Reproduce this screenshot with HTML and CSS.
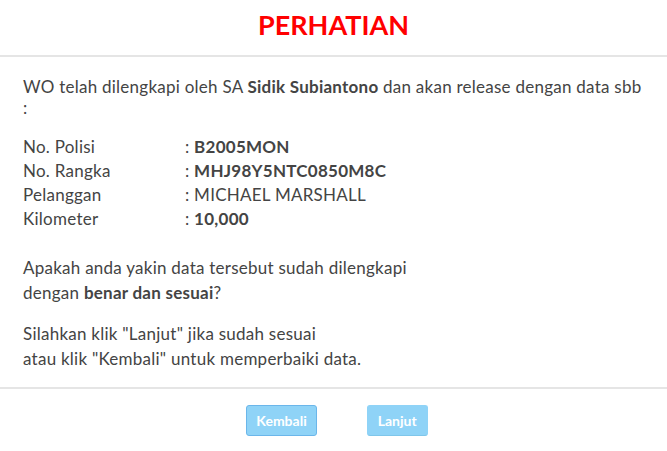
FILE: index.html
```html
<!DOCTYPE html>
<html lang="id">
<head>
	<meta charset="UTF-8">
	<title>Perhatian</title>
	<link rel="stylesheet" href="styles.css">
</head>
<body>
<div class="modal">
	<div class="modal-head">
		<h2>PERHATIAN</h2>
	</div>
	<div class="modal-body">
		<p class="intro">WO telah dilengkapi oleh SA <b>Sidik Subiantono</b> dan akan release dengan data sbb :</p>
		<ul class="data">
			<li><span class="lbl">No. Polisi</span><span>: <b>B2005MON</b></span></li>
			<li><span class="lbl">No. Rangka</span><span>: <b>MHJ98Y5NTC0850M8C</b></span></li>
			<li><span class="lbl">Pelanggan</span><span>: MICHAEL MARSHALL</span></li>
			<li><span class="lbl">Kilometer</span><span>: <b>10,000</b></span></li>
		</ul>
		<p class="ask">Apakah anda yakin data tersebut sudah dilengkapi<br>dengan <b>benar dan sesuai</b>?</p>
		<p class="ask">Silahkan klik "Lanjut" jika sudah sesuai<br>atau klik "Kembali" untuk memperbaiki data.</p>
	</div>
	<div class="modal-foot">
		<a href="javascript:;" class="btn btn-back">Kembali</a>
		<a href="javascript:;" class="btn btn-next">Lanjut</a>
	</div>
</div>
</body>
</html>
```

FILE: styles.css
```css
*{ padding: 0; margin: 0; box-sizing: border-box; }
body{ background: #fff; font-family: Lato, "Open Sans", sans-serif; color: #444; font-size: 17px; letter-spacing: 0.25px; }
li{ list-style-type: none; }

.modal{ width: 667px; }
.modal-head{ height: 57px; border-bottom: 2px solid #e5e5e5; text-align: center; }
.modal-head h2{ color: #f00; font-size: 27px; font-weight: 700; line-height: 48px; padding-top: 1px; letter-spacing: 0; }

.modal-body{ padding: 19px 22px 16px 23px; }
.intro{ line-height: 21px; margin-bottom: 17px; }
.data li{ display: flex; line-height: 24px; }
.data .lbl{ width: 162px; }
.ask{ line-height: 25px; margin-top: 24px; }
.ask + .ask{ margin-top: 16px; }

.modal-foot{ border-top: 2px solid #e5e5e5; padding: 16px 0; display: flex; justify-content: center; gap: 50px; }
.btn{ display: inline-block; height: 31px; line-height: 29px; padding: 0 10px; color: #fff; font-size: 14px; font-weight: 700; letter-spacing: 0; text-decoration: none; background: #8fd3f7; border-radius: 3px; border: 1px solid #8fd3f7; border-bottom-color: #7fc6ea; }
.btn-back{ border-color: #6bb6ea; padding: 0 9px; margin-left: 7px; }
```
